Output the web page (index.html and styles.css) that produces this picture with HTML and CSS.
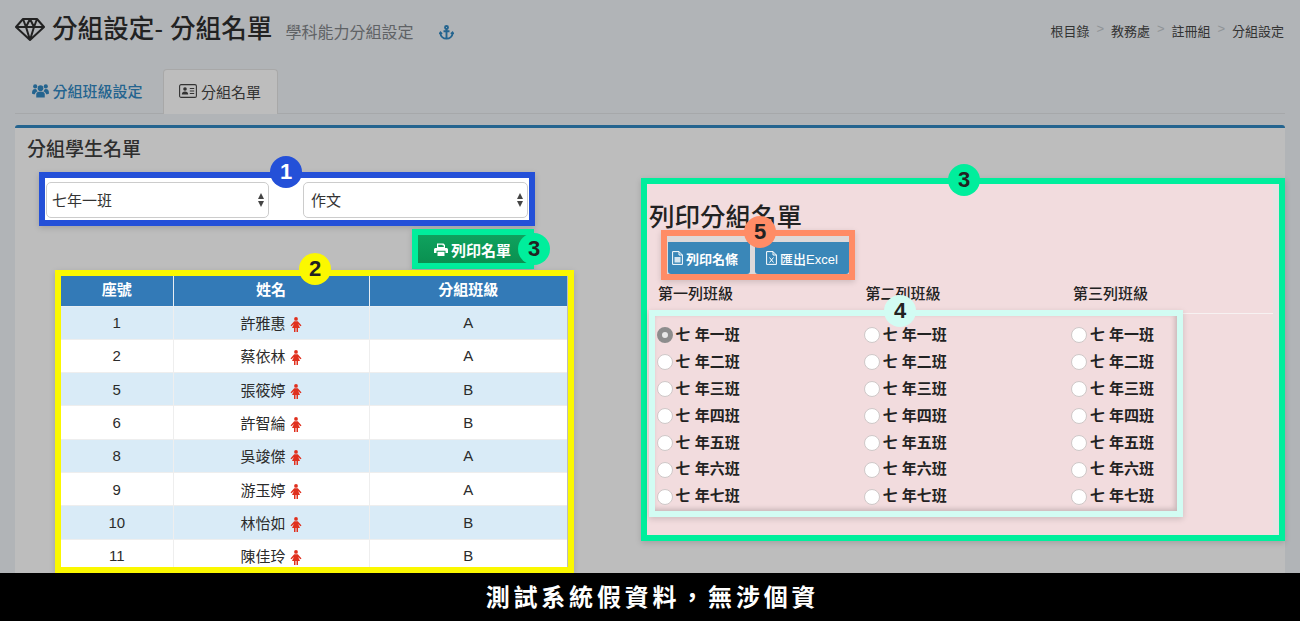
FILE: index.html
```html
<!DOCTYPE html>
<html lang="zh-Hant">
<head>
	<meta charset="UTF-8">
	<title>分組設定- 分組名單</title>
	<link rel="stylesheet" href="styles.css">
</head>
<body>

<svg class="sprite" width="0" height="0">
	<symbol id="female" viewBox="0 0 12 15">
		<circle cx="6" cy="1.9" r="1.9"/>
		<path d="M4.2 4.2h3.6l3.7 4.2-1 .9-2.4-2.4 1.9 4.1H8v4H6.5v-4h-1v4H4v-4H2l1.900-4.100-2.400 2.400-1-.9z"/>
	</symbol>
</svg>

<header class="page-head">
	<svg class="icon-gem" viewBox="0 0 30 24"><path d="M8 2h14l7 8-14 13L1 10zM1 10h28M8 2l3 8 4 13 4-13 3-8M11 10l4-8 4 8"/></svg>
	<h1>分組設定- 分組名單</h1>
	<small>學科能力分組設定</small>
	<svg class="icon-anchor" viewBox="0 0 16 16"><circle cx="8" cy="2.6" r="1.6"/><path d="M8 4.2V14.600M4.800 6.600h6.400M1.600 8.400c0 3.600 3 6 6.400 6.200 3.400-.2 6.400-2.600 6.400-6.200M.4 9.800l1.200-1.800 1.600 1.600M12.800 9.600l1.600-1.600 1.200 1.800"/></svg>
	<ol class="crumbs">
		<li>根目錄</li>
		<li class="sep">&gt;</li>
		<li>教務處</li>
		<li class="sep">&gt;</li>
		<li>註冊組</li>
		<li class="sep">&gt;</li>
		<li>分組設定</li>
	</ol>
</header>

<ul class="tabs">
	<li class="tab">
		<svg class="icon-users" viewBox="0 0 18 15"><circle cx="9" cy="5" r="3"/><circle cx="3.4" cy="3.2" r="2.2"/><circle cx="14.6" cy="3.2" r="2.2"/><path d="M4.5 15V11.500C4.500 9.500 6 8.500 9 8.500s4.500 1 4.500 3V15zM0 10.500C0 7.500 1 6 3.400 6l1.200.2c.3 1 .8 1.600 1.500 2.200-1.700.6-2.900 1.700-3 3.100C1.500 11.500 0 11.200 0 10.500zM18 10.500C18 7.500 17 6 14.600 6l-1.200.2c-.3 1-.8 1.600-1.500 2.200 1.700.6 2.900 1.700 3 3.100 1.600 0 3.100-.3 3.100-1z"/></svg>
		分組班級設定
	</li>
	<li class="tab active">
		<svg class="icon-card" viewBox="0 0 18 14"><rect x=".6" y=".6" width="16.8" height="12.8" rx="1.5"/><circle class="solid" cx="6" cy="5" r="1.8"/><path class="solid" d="M2.800 10.500c0-2 1.200-3 3.200-3s3.200 1 3.200 3z"/><path d="M10.800 4.500h4.400M10.800 7h4.400M10.800 9.500h4.400"/></svg>
		分組名單
	</li>
</ul>

<main class="panel">

	<!-- left side -->
	<section class="list-side">
		<h2>分組學生名單</h2>

		<div class="filters mark">
			<span class="badge badge-blue">1</span>
			<div class="select-wrap first">
				<select>
					<option>七年一班</option>
				</select>
			</div>
			<div class="select-wrap second">
				<select>
					<option>作文</option>
				</select>
			</div>
		</div>

		<div class="print-mark mark">
			<span class="badge badge-green">3</span>
			<button class="btn-print">
				<svg class="icon-print" viewBox="0 0 14 13"><path d="M3 5V.6h6.500L11 2v3zM4.200 3.900h5.600V2.600H8.600V1.700H4.200z" fill-rule="evenodd"/><path d="M1.500 5h11c.8 0 1.500.7 1.500 1.500V10h-2.500V7.800h-9V10H0V6.500C0 5.700.7 5 1.500 5z"/><path d="M3.500 8.800h7V13h-7z"/></svg>
				列印名單
			</button>
		</div>

		<div class="table-mark mark">
			<span class="badge badge-yellow">2</span>
			<div class="table-clip">
				<table>
					<thead>
						<tr>
							<th class="col-no">座號</th>
							<th class="col-name">姓名</th>
							<th>分組班級</th>
						</tr>
					</thead>
					<tbody>
						<tr><td>1</td><td>許雅惠 <svg class="icon-female"><use href="#female"/></svg></td><td>A</td></tr>
						<tr><td>2</td><td>蔡依林 <svg class="icon-female"><use href="#female"/></svg></td><td>A</td></tr>
						<tr><td>5</td><td>張筱婷 <svg class="icon-female"><use href="#female"/></svg></td><td>B</td></tr>
						<tr><td>6</td><td>許智綸 <svg class="icon-female"><use href="#female"/></svg></td><td>B</td></tr>
						<tr><td>8</td><td>吳竣傑 <svg class="icon-female"><use href="#female"/></svg></td><td>A</td></tr>
						<tr><td>9</td><td>游玉婷 <svg class="icon-female"><use href="#female"/></svg></td><td>A</td></tr>
						<tr><td>10</td><td>林怡如 <svg class="icon-female"><use href="#female"/></svg></td><td>B</td></tr>
						<tr><td>11</td><td>陳佳玲 <svg class="icon-female"><use href="#female"/></svg></td><td>B</td></tr>
					</tbody>
				</table>
			</div>
		</div>
	</section>

	<!-- right side -->
	<section class="print-side mark">
		<span class="badge badge-green">3</span>
		<div class="print-inner">
			<h3>列印分組名單</h3>

			<div class="actions mark">
				<span class="badge badge-orange">5</span>
				<button class="btn-blue btn-strip">
					<svg class="icon-file" viewBox="0 0 11 14"><path d="M.6.6h6.400l3.400 3.400v9.400H.6zM7 .6V4h3.400"/><path class="solid" d="M2.500 6h6v5.500h-6z"/></svg>
					列印名條
				</button>
				<button class="btn-blue btn-excel">
					<svg class="icon-file" viewBox="0 0 11 14"><path d="M.6.6h6.400l3.400 3.400v9.400H.6zM7 .6V4h3.400M3.500 6.500l4 5M7.500 6.500l-4 5"/></svg>
					匯出Excel
				</button>
			</div>

			<div class="col-heads">
				<span>第一列班級</span>
				<span>第二列班級</span>
				<span>第三列班級</span>
			</div>

			<div class="class-row">
				<div class="classes mark">
					<span class="badge badge-mint">4</span>
					<div class="class-grid">
						<label><input type="radio" name="c1" checked>七 年一班</label>
						<label><input type="radio" name="c2">七 年一班</label>
						<label><input type="radio" name="c3">七 年一班</label>
						<label><input type="radio" name="c1">七 年二班</label>
						<label><input type="radio" name="c2">七 年二班</label>
						<label><input type="radio" name="c3">七 年二班</label>
						<label><input type="radio" name="c1">七 年三班</label>
						<label><input type="radio" name="c2">七 年三班</label>
						<label><input type="radio" name="c3">七 年三班</label>
						<label><input type="radio" name="c1">七 年四班</label>
						<label><input type="radio" name="c2">七 年四班</label>
						<label><input type="radio" name="c3">七 年四班</label>
						<label><input type="radio" name="c1">七 年五班</label>
						<label><input type="radio" name="c2">七 年五班</label>
						<label><input type="radio" name="c3">七 年五班</label>
						<label><input type="radio" name="c1">七 年六班</label>
						<label><input type="radio" name="c2">七 年六班</label>
						<label><input type="radio" name="c3">七 年六班</label>
						<label><input type="radio" name="c1">七 年七班</label>
						<label><input type="radio" name="c2">七 年七班</label>
						<label><input type="radio" name="c3">七 年七班</label>
					</div>
				</div>
				<div class="rule"></div>
			</div>
		</div>
	</section>
</main>

<footer class="notice">測試系統假資料，無涉個資</footer>

</body>
</html>
```

FILE: styles.css
```css
* {
	margin: 0;
	padding: 0;
	box-sizing: border-box;
}

html, body {
	height: 621px;
	overflow: hidden;
}

body {
	font-family: "Liberation Sans", "Noto Sans CJK TC", sans-serif;
	background-color: #b1b4b7;
	color: #333;
	padding: 0 15px;
	font-size: 15px;
}

.sprite {
	position: absolute;
}

ul, ol {
	list-style: none;
}

/*header*/
.page-head {
	display: flex;
	align-items: center;
	height: 28px;
	margin-top: 15px;
}

.icon-gem {
	width: 30px;
	height: 24px;
	fill: none;
	stroke: #222;
	stroke-width: 2;
	stroke-linejoin: round;
}

.page-head h1 {
	font-size: 25.6px;
	line-height: 28px;
	font-weight: 500;
	color: #222;
	margin-left: 7px;
	white-space: nowrap;
}

.page-head small {
	font-size: 16px;
	color: #5f6265;
	margin-left: 13px;
	padding-top: 4px;
}

.icon-anchor {
	width: 15px;
	height: 15px;
	margin: 6px 0 0 26px;
	fill: none;
	stroke: #24648f;
	stroke-width: 2;
}

.crumbs {
	display: flex;
	margin-left: auto;
	padding: 2px 1px 0 0;
	font-size: 13px;
	color: #333;
}

.crumbs .sep {
	width: 21.5px;
	text-align: center;
	color: #8f9396;
}

/*tabs*/
.tabs {
	display: flex;
	height: 45px;
	margin-top: 26px;
	padding-left: 2px;
	gap: 5.5px;
	border-bottom: 1px solid #a6a8aa;
}

.tab {
	display: flex;
	align-items: center;
	gap: 3.5px;
	padding: 0 15px 2px;
	font-weight: 500;
	color: #24648f;
}

.tab.active {
	height: 45px;
	gap: 4px;
	padding: 0 16px 2px 15px;
	color: #333;
	font-weight: 400;
	background-color: #bdbdbd;
	border: 1px solid #a8a8a8;
	border-bottom: 0;
	border-radius: 4px 4px 0 0;
}

.icon-users {
	width: 17px;
	height: 15px;
	fill: #24648f;
}

.icon-card {
	width: 18px;
	height: 14px;
	fill: none;
	stroke: #333;
	stroke-width: 1.1;
}

.icon-card .solid {
	fill: #333;
	stroke: none;
}

/*panel*/
.panel {
	display: flex;
	height: 497px;
	margin-top: 11px;
	background-color: #bdbdbd;
	border-top: 3px solid #24648f;
	border-radius: 3px 3px 0 0;
}

.list-side {
	width: 626px;
	flex: none;
}

.list-side h2 {
	height: 44px;
	padding: 7px 0 0 12px;
	font-size: 19px;
	line-height: 30px;
	font-weight: 500;
	color: #2e2e2e;
}

/*marker boxes round the numbered parts*/
.mark {
	position: relative;
	border-style: solid;
	border-width: 6px;
	box-shadow: 0 2px 6px rgba(0, 0, 0, 0.15);
}

.badge {
	position: absolute;
	z-index: 2;
	width: 32px;
	height: 32px;
	border-radius: 50%;
	font-size: 22px;
	line-height: 32px;
	font-weight: 700;
	text-align: center;
	color: #222;
}

.badge-blue {
	background-color: #2450d8;
	color: white;
}

.badge-green {
	background-color: #00ee9c;
}

.badge-yellow {
	background-color: #fbf800;
}

.badge-mint {
	background-color: #d2fcf3;
}

.badge-orange {
	background-color: #ff8c66;
}

/*select*/
.filters {
	display: flex;
	width: 496px;
	height: 54px;
	margin-left: 24px;
	padding: 4px 1px 0 1px;
	background-color: white;
	border-color: #2450d8;
}

.filters .badge {
	left: 225px;
	top: -22px;
}

.select-wrap {
	position: relative;
	width: 225px;
	height: 36px;
}

.select-wrap.first {
	width: 223px;
	margin-right: 34px;
}

.select-wrap::before,
.select-wrap::after {
	content: "";
	position: absolute;
	right: 5px;
	border-left: 3.5px solid transparent;
	border-right: 3.5px solid transparent;
}

.select-wrap::before {
	top: 11px;
	border-bottom: 6px solid #444;
}

.select-wrap::after {
	top: 19px;
	border-top: 6px solid #444;
}

select {
	appearance: none;
	width: 100%;
	height: 100%;
	padding-left: 5px;
	font: inherit;
	color: #333;
	background-color: white;
	border: 1px solid #ccc;
	border-radius: 5px;
}

.second select {
	padding-left: 7px;
}

/*print button*/
.print-mark {
	width: 122px;
	height: 40px;
	margin: 3px 0 0 397px;
	border-color: #00ee9c;
}

.print-mark .badge {
	left: 100px;
	top: -2px;
}

.btn-print {
	display: flex;
	align-items: center;
	width: 100%;
	height: 100%;
	padding-left: 16px;
	gap: 3px;
	font: inherit;
	font-weight: 700;
	color: white;
	background: linear-gradient(#0fa25e, #0a9050);
	border: 0;
}

.icon-print {
	width: 14px;
	height: 13px;
	fill: white;
}

/*table*/
.table-mark {
	width: 519px;
	height: 303px;
	margin: 1px 0 0 40px;
	border-color: #fbf800;
}

.table-mark .badge {
	left: 238px;
	top: -23px;
}

.table-clip {
	height: 100%;
	overflow: hidden;
}

table {
	width: 506px;
	border-collapse: collapse;
	table-layout: fixed;
	text-align: center;
	background-color: white;
}

th {
	height: 30px;
	padding-bottom: 5px;
	font-weight: 700;
	color: white;
	background-color: #337ab7;
	border-right: 1px solid #e8eef3;
	border-bottom: 1px solid #e8eef3;
}

td {
	height: 33.3px;
	color: #2b2b2b;
	border-right: 1px solid #eeeeee;
	border-bottom: 1px solid #eeeeee;
}

th:last-child, td:last-child {
	border-right: 0;
}

tbody tr:nth-child(odd) {
	background-color: #d9ebf7;
}

.col-no {
	width: 112px;
}

.col-name {
	width: 196px;
}

.icon-female {
	width: 12px;
	height: 15px;
	fill: #e0301e;
	vertical-align: -3px;
}

/*right side*/
.print-side {
	width: 644px;
	height: 363px;
	margin-top: 50px;
	background-color: #f2dcde;
	border-color: #00ee9c;
}

.print-side > .badge {
	left: 301px;
	top: -20px;
}

.print-inner {
	height: 100%;
	padding-top: 20px;
	border-right: 6px solid #e7e1e2;
}

.print-inner h3 {
	height: 26px;
	padding-left: 2px;
	font-size: 25.5px;
	line-height: 26px;
	font-weight: 500;
	color: #222;
}

.actions {
	display: flex;
	width: 194px;
	height: 50px;
	margin-left: 14px;
	padding: 6px 0 0 1px;
	gap: 5px;
	background-color: #ded9d9;
	border-color: #ff8c66;
}

.actions .badge {
	left: 77px;
	top: -20px;
}

.btn-blue {
	display: flex;
	align-items: center;
	height: 32px;
	font-family: inherit;
	font-size: 13px;
	font-weight: 700;
	gap: 3px;
	color: white;
	background-color: #3a87b8;
	border: 0;
	border-radius: 0 0 3px 3px;
}

.btn-strip {
	width: 82px;
	padding-left: 4px;
}

.btn-excel {
	width: 94px;
	padding-left: 11px;
	font-weight: 500;
}

.icon-file {
	width: 11px;
	height: 14px;
	fill: none;
	stroke: white;
	stroke-width: 1;
}

.icon-file .solid {
	fill: #d5e6f1;
	stroke: none;
}

.col-heads {
	display: grid;
	grid-template-columns: repeat(3, 207.5px);
	height: 28px;
	padding-left: 11px;
	font-weight: 500;
	line-height: 28px;
	color: #222;
}

/*radio list*/
.class-row {
	display: flex;
	margin: 2px 0 0 2px;
}

.classes {
	width: 534px;
	height: 207px;
	border-color: #d2fcf3;
}

.classes .badge {
	left: 229px;
	top: -21px;
}

.class-grid {
	display: grid;
	grid-template-columns: repeat(3, 207.2px);
	grid-auto-rows: 26.9px;
	height: 100%;
	padding: 5px 0 0 1.5px;
	box-shadow: inset -2px -2px 5px rgba(0, 0, 0, 0.18);
}

.class-grid label {
	display: flex;
	align-items: center;
	gap: 3px;
	padding-bottom: 2px;
	font-weight: 700;
	color: #222;
}

.class-grid input {
	appearance: none;
	width: 16px;
	height: 16px;
	margin-top: 4px;
	background-color: white;
	border: 1px solid #cfc8c8;
	border-radius: 50%;
}

.class-grid input:checked {
	border: 5px solid #8d8d8d;
	background-color: #e8e8e8;
}

.rule {
	flex: 1;
	margin-top: 3px;
	height: 1px;
	background-color: #f7f2f2;
}

/*black strip*/
.notice {
	position: fixed;
	left: 0;
	right: 0;
	bottom: 0;
	z-index: 5;
	height: 48px;
	padding-left: 5px;
	font-size: 24px;
	font-weight: 700;
	line-height: 49px;
	letter-spacing: 3.8px;
	text-align: center;
	color: white;
	background-color: black;
}
```
